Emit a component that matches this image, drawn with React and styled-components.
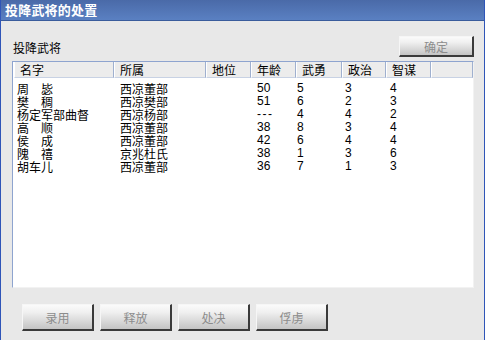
import React from "react";
import styled, { createGlobalStyle } from "styled-components";

const Global = createGlobalStyle`
  html, body {
    margin: 0;
    padding: 0;
    background: #e8e8e8;
  }
  body {
    font-family: "Noto Sans CJK SC", "Liberation Sans", sans-serif;
    font-size: 12px;
  }
`;

const Window = styled.div`
  width: 485px;
  height: 340px;
  box-sizing: border-box;
  background: #e8e8e8;
  border-left: 1px solid #2f55b8;
  border-right: 1px solid #2f55b8;
  display: flex;
  flex-direction: column;
  overflow: hidden;
`;

const TitleBar = styled.div`
  height: 20px;
  flex: none;
  background: linear-gradient(#4a6aa8, #5a80c2);
  border-bottom: 1px solid #3a5c9c;
  color: #fff;
  font-weight: bold;
  font-size: 13px;
  line-height: 20px;
  padding-left: 4px;
  letter-spacing: 0.2px;
`;

const Body = styled.div`
  padding: 15px 10px 0 11px;
  display: flex;
  flex-direction: column;
`;

const TopRow = styled.div`
  height: 21px;
  display: flex;
  align-items: center;
  justify-content: space-between;
  margin-bottom: 4px;
`;

const Label = styled.div`
  padding-left: 1px;
  font-size: 12px;
  color: #000;
  padding-top: 1px;
`;

const Button = styled.div`
  width: ${(p) => p.$w}px;
  height: ${(p) => p.$h}px;
  box-sizing: border-box;
  background: linear-gradient(#fbfbfb, #f0f0f0 30%, #c4c4c4);
  border-top: 1px solid #f6f6f6;
  border-left: 1px solid #f6f6f6;
  border-right: 2px solid #3a3a3a;
  border-bottom: 2px solid #3a3a3a;
  color: #8c8c8c;
  font-size: 12px;
  display: flex;
  align-items: center;
  justify-content: center;
`;

const List = styled.div`
  height: 227px;
  box-sizing: border-box;
  background: #fff;
  border-top: 1px solid #8ea4cf;
  border-left: 1px solid #8ea4cf;
  border-right: 1px solid #f2f2f2;
  border-bottom: 1px solid #f2f2f2;
  padding: 0 0 0 1px;
`;

const HeaderRow = styled.div`
  display: grid;
  grid-template-columns: 100px 92px 45px 45px 46px 44px 45px 1fr;
  height: 16px;
`;

const HeaderCell = styled.div`
  box-sizing: border-box;
  background: #ececec;
  border-left: 1px solid #fff;
  border-right: 1px solid #9fb0cf;
  border-bottom: 1px solid #c8d2e4;
  padding-left: 5px;
  line-height: 15px;
  font-size: 12px;
  color: #000;
  white-space: nowrap;
`;

const Rows = styled.div`
  padding-top: 4px;
`;

const Row = styled.div`
  display: grid;
  grid-template-columns: 103px 137px 40px 48px 45px 1fr;
  padding-left: 3px;
  height: 13px;
  line-height: 13px;
  font-size: 12px;
  color: #000;
`;

const Num = styled.span`
  font-family: "Liberation Sans", sans-serif;
  font-size: 12px;
  letter-spacing: ${(p) => (p.$dash ? "1.5px" : "0")};
`;

const Bottom = styled.div`
  display: flex;
  gap: 6px;
  padding: 16px 0 0 10px;
`;

const columns = ["名字", "所属", "地位", "年龄", "武勇", "政治", "智谋", ""];

const officers = [
  ["周　毖", "西凉董部", "50", "5", "3", "4"],
  ["樊　稠", "西凉樊部", "51", "6", "2", "3"],
  ["杨定军部曲督", "西凉杨部", "---", "4", "4", "2"],
  ["高　顺", "西凉董部", "38", "8", "3", "4"],
  ["侯　成", "西凉董部", "42", "6", "4", "4"],
  ["隗　禧", "京兆杜氏", "38", "1", "3", "6"],
  ["胡车儿", "西凉董部", "36", "7", "1", "3"],
];

export default function App() {
  return (
    <Window>
      <Global />
      <TitleBar>投降武将的处置</TitleBar>
      <Body>
        <TopRow>
          <Label>投降武将</Label>
          <Button $w={75} $h={21}>确定</Button>
        </TopRow>
        <List>
          <HeaderRow>
            {columns.map((c, i) => (
              <HeaderCell key={i}>{c}</HeaderCell>
            ))}
          </HeaderRow>
          <Rows>
            {officers.map((o) => (
              <Row key={o[0]}>
                <span>{o[0]}</span>
                <span>{o[1]}</span>
                <Num $dash={o[2] === "---"}>{o[2]}</Num>
                <Num>{o[3]}</Num>
                <Num>{o[4]}</Num>
                <Num>{o[5]}</Num>
              </Row>
            ))}
          </Rows>
        </List>
        <Bottom>
          {["录用", "释放", "处决", "俘虏"].map((b) => (
            <Button key={b} $w={72} $h={27}>
              {b}
            </Button>
          ))}
        </Bottom>
      </Body>
    </Window>
  );
}
